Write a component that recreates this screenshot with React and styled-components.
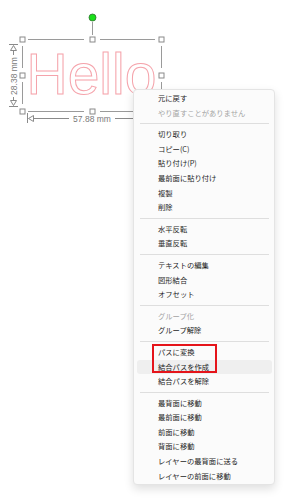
import React from "react";
import styled, { createGlobalStyle } from "styled-components";

const menu = [
  { label: "元に戻す" },
  { label: "やり直すことがありません", disabled: true },
  "sep",
  { label: "切り取り" },
  { label: "コピー(C)" },
  { label: "貼り付け(P)" },
  { label: "最前面に貼り付け" },
  { label: "複製" },
  { label: "削除" },
  "sep",
  { label: "水平反転" },
  { label: "垂直反転" },
  "sep",
  { label: "テキストの編集" },
  { label: "図形結合" },
  { label: "オフセット" },
  "sep",
  { label: "グループ化", disabled: true },
  { label: "グループ解除" },
  "sep",
  { label: "パスに変換" },
  { label: "結合パスを作成", hover: true },
  { label: "結合パスを解除" },
  "sep",
  { label: "最背面に移動" },
  { label: "最前面に移動" },
  { label: "前面に移動" },
  { label: "背面に移動" },
  { label: "レイヤーの最背面に送る" },
  { label: "レイヤーの前面に移動" },
];

const handles = [
  [22, 39], [92, 39], [161, 39],
  [22, 75], [161, 75],
  [22, 111], [92, 111], [161, 111],
];

function Canvas() {
  return (
    <Drawing width="296" height="132" viewBox="0 0 296 132">
      <HelloText x="26.5" y="94">Hello</HelloText>

      {/* selection frame */}
      <g stroke="#9a9a9a" strokeWidth="1" fill="none">
        <line x1="28" y1="39.5" x2="84" y2="39.5" />
        <line x1="100" y1="39.5" x2="155" y2="39.5" />
        <line x1="28" y1="111.5" x2="84" y2="111.5" />
        <line x1="100" y1="111.5" x2="155" y2="111.5" />
        <line x1="22.5" y1="46" x2="22.5" y2="68" />
        <line x1="22.5" y1="82" x2="22.5" y2="104" />
        <line x1="161.5" y1="46" x2="161.5" y2="68" />
        <line x1="161.5" y1="82" x2="161.5" y2="104" />
        <line x1="92.5" y1="22" x2="92.5" y2="35" />
      </g>
      {handles.map(([x, y], i) => (
        <rect
          key={i}
          x={x - 2}
          y={y - 2}
          width="5"
          height="5"
          fill="#fff"
          stroke="#8a8a8a"
          strokeWidth="1"
        />
      ))}
      <circle cx="92.5" cy="17.5" r="3.5" fill="#19e019" stroke="#2f6f2f" strokeWidth="0.8" />

      {/* height dimension */}
      <g stroke="#8a8a8a" strokeWidth="1" fill="none">
        <line x1="9" y1="44.5" x2="18" y2="44.5" />
        <polygon points="13.5,45.5 10.5,50.5 16.5,50.5" />
        <line x1="13.5" y1="50.5" x2="13.5" y2="55" />
        <line x1="13.5" y1="97" x2="13.5" y2="100.5" />
        <polygon points="13.5,105.5 10.5,100.5 16.5,100.5" />
        <line x1="9" y1="106.5" x2="18" y2="106.5" />
      </g>
      <DimText x="14" y="76" transform="rotate(-90 14 76)">28.38 mm</DimText>

      {/* width dimension */}
      <g stroke="#8a8a8a" strokeWidth="1" fill="none">
        <line x1="27.5" y1="113" x2="27.5" y2="123" />
        <polygon points="28.5,118.5 33.5,115.5 33.5,121.5" />
        <line x1="33.5" y1="118.5" x2="69" y2="118.5" />
        <line x1="115" y1="118.5" x2="133" y2="118.5" />
      </g>
      <DimText x="92" y="118.5">57.88 mm</DimText>
    </Drawing>
  );
}

export default function App() {
  return (
    <>
      <GlobalStyle />
      <Page>
        <Canvas />
        <ContextMenu>
          {menu.map((item, i) =>
            item === "sep" ? (
              <Separator key={i} />
            ) : (
              <MenuItem key={i} $disabled={item.disabled} $hover={item.hover}>
                {item.label}
              </MenuItem>
            )
          )}
          <Callout />
        </ContextMenu>
      </Page>
    </>
  );
}

const GlobalStyle = createGlobalStyle`
  html, body {
    margin: 0;
    padding: 0;
    background: #fff;
  }
`;

const Page = styled.div`
  position: relative;
  width: 296px;
  height: 500px;
  overflow: hidden;
  background: #fff;
`;

const Drawing = styled.svg`
  display: block;
`;

const HelloText = styled.text`
  font-family: "Liberation Sans", Arial, sans-serif;
  font-size: 57px;
  fill: none;
  stroke: #f5a3ab;
  stroke-width: 1;
`;

const DimText = styled.text`
  font-family: "Liberation Sans", Arial, sans-serif;
  font-size: 8.5px;
  fill: #7a7a7a;
  text-anchor: middle;
  dominant-baseline: central;
`;

const ContextMenu = styled.div`
  position: absolute;
  left: 133px;
  top: 89px;
  width: 142px;
  box-sizing: border-box;
  padding: 1px 0;
  background: #fbfbfb;
  border: 1px solid #e4e4e4;
  border-radius: 4px;
  box-shadow: 0 4px 10px rgba(0, 0, 0, 0.13);
  font-family: "Noto Sans CJK JP", "Liberation Sans", sans-serif;
`;

const MenuItem = styled.div`
  height: 14.6px;
  line-height: 14.6px;
  margin: 0 2px 0 3px;
  padding-left: 21px;
  border-radius: 3px;
  font-size: 7.3px;
  white-space: nowrap;
  color: ${(p) => (p.$disabled ? "#a3a3a3" : "#1e1e1e")};
  background: ${(p) => (p.$hover ? "#efefef" : "transparent")};
`;

const Separator = styled.div`
  height: 1px;
  margin: 3px 5px 3px 6px;
  background: #dedede;
`;

/* red annotation box over two items */
const Callout = styled.div`
  position: absolute;
  left: 18px;
  top: 254px;
  width: 65px;
  height: 29px;
  box-sizing: border-box;
  border: 2px solid #e5141a;
  pointer-events: none;
`;
